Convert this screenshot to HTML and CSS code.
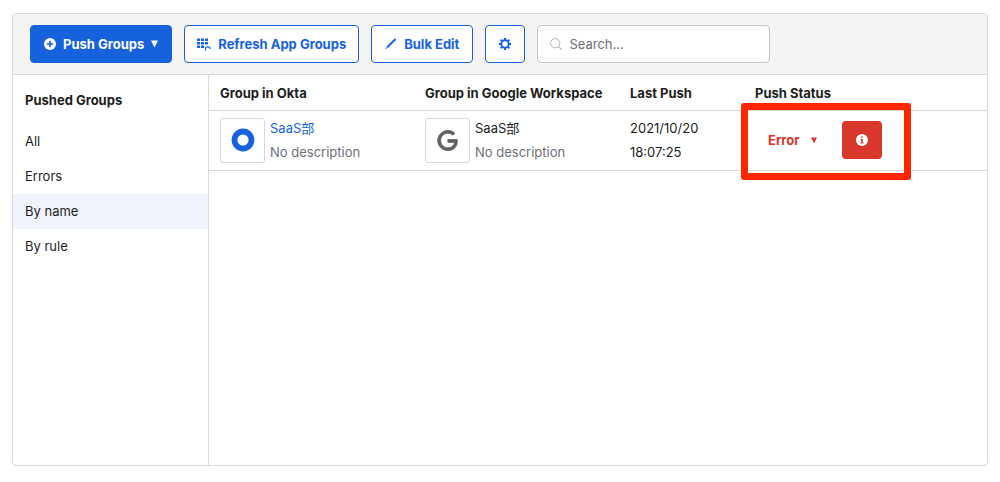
FILE: index.html
```html
<!DOCTYPE html>
<html lang="en">
<head>
<meta charset="utf-8">
<meta name="viewport" content="width=device-width, initial-scale=1">
<title>Push Groups</title>
<link rel="stylesheet" href="styles.css">
</head>
<body>
<main class="panel">
  <div class="toolbar">
    <button type="button" class="btn btn-primary">
      <svg class="icon" viewBox="0 0 12 12" aria-hidden="true"><circle cx="6" cy="6" r="6" fill="#fff"/><path d="M6 2.8v6.4M2.8 6h6.4" stroke="#1662dd" stroke-width="1.6"/></svg>
      <span>Push Groups</span>
      <svg class="caret" viewBox="0 0 7 8" aria-hidden="true"><path d="M0 .5h7L3.500 7.500z" fill="currentColor"/></svg>
    </button>
    <button type="button" class="btn">
      <svg class="icon-grid" viewBox="0 0 14 13" aria-hidden="true"><path d="M0 .5h3v2.500H0zM4 .5h3v2.500H4zM8 .5h3v2.500H8zM0 4h3v2.500H0zM4 4h3v2.500H4zM8 4h3v2.500H8zM0 7.500h3v2.500H0zM4 7.500h3v2.500H4z" fill="currentColor"/><path d="M8.500 12.500V10.500q0-1.700 2-1.700h1q1.700 0 1.900 2.200" fill="none" stroke="currentColor" stroke-width="1.200"/></svg>
      <span>Refresh App Groups</span>
    </button>
    <button type="button" class="btn btn-edit">
      <svg class="icon" viewBox="0 0 12 12" aria-hidden="true"><path d="M2.500 9L10 1.500" stroke="currentColor" stroke-width="1.900" stroke-linecap="round"/><path d="M.3 11.300l.7-1.700 1 1z" fill="currentColor"/></svg>
      <span>Bulk Edit</span>
    </button>
    <button type="button" class="btn btn-icon" aria-label="Settings">
      <svg class="icon" viewBox="0 0 12 12" aria-hidden="true"><circle cx="6" cy="6" r="3.700" fill="none" stroke="currentColor" stroke-width="1.900"/><path d="M6 0v2M6 10v2M0 6h2M10 6h2M1.700 1.700l1.400 1.400M8.900 8.900l1.400 1.400M1.700 10.300l1.400-1.400M8.900 3.100l1.400-1.400" stroke="currentColor" stroke-width="2"/></svg>
    </button>
    <label class="search">
      <svg class="icon" viewBox="0 0 12 12" fill="none" stroke="#b5b5b9" aria-hidden="true"><circle cx="5.200" cy="5.200" r="4.600"/><path d="M8.500 8.500l3 3" stroke-width="1.300"/></svg>
      <input type="text" placeholder="Search..." aria-label="Search">
    </label>
  </div>
  <div class="content">
    <nav class="sidebar">
      <h2 class="sidebar-title">Pushed Groups</h2>
      <a class="nav-item" href="#all">All</a>
      <a class="nav-item" href="#errors">Errors</a>
      <a class="nav-item nav-active" href="#name">By name</a>
      <a class="nav-item" href="#rule">By rule</a>
    </nav>
    <div class="list">
      <table class="groups">
        <colgroup><col class="col-group"><col class="col-group"><col class="col-push"><col></colgroup>
        <thead>
          <tr><th>Group in Okta</th><th>Group in Google Workspace</th><th>Last Push</th><th>Push Status</th></tr>
        </thead>
        <tbody>
          <tr>
            <td>
              <div class="group">
                <span class="logo"><svg class="logo-okta" viewBox="0 0 24 24" aria-hidden="true"><circle cx="12" cy="12" r="8.500" fill="none" stroke="#1662dd" stroke-width="5.800"/></svg></span>
                <span class="group-text"><a class="group-link" href="#group">SaaS部</a><span class="muted">No description</span></span>
              </div>
            </td>
            <td>
              <div class="group">
                <span class="logo"><svg class="logo-google" viewBox="-.5 -.5 25 25" aria-hidden="true"><path d="M12.480 10.920v3.280h7.840c-.24 1.840-.853 3.187-1.787 4.133-1.147 1.147-2.933 2.400-6.053 2.400-4.827 0-8.600-3.893-8.600-8.720s3.773-8.720 8.600-8.720c2.600 0 4.507 1.027 5.907 2.347l2.307-2.307C18.747 1.440 16.133 0 12.480 0 5.867 0 .307 5.387.307 12s5.560 12 12.173 12c3.573 0 6.267-1.173 8.373-3.360 2.160-2.160 2.840-5.213 2.840-7.667 0-.76-.053-1.467-.173-2.053H12.480z" fill="#616161" stroke="#616161"/></svg></span>
                <span class="group-text"><span>SaaS部</span><span class="muted">No description</span></span>
              </div>
            </td>
            <td><time class="push-time">2021/10/20<br>18:07:25</time></td>
            <td class="status-cell">
              <div class="status">
                <button type="button" class="error-menu"><span>Error</span><svg class="caret-small" viewBox="0 0 6 7" aria-hidden="true"><path d="M0 .5h6L3 6.500z" fill="currentColor"/></svg></button>
                <button type="button" class="error-info" aria-label="Error details"><svg class="icon" viewBox="0 0 12 12" aria-hidden="true"><circle cx="6" cy="6" r="6" fill="#fff"/><path d="M5.100 2.300h1.700v1.500H5.100zM4.500 4.900h2.300v3.500h.8v1.100H4.400V8.400h.8V6h-.7z" fill="#da372c"/></svg></button>
              </div>
              <div class="highlight"></div>
            </td>
          </tr>
        </tbody>
      </table>
    </div>
  </div>
</main>
</body>
</html>
```
FILE: styles.css
```css
* { box-sizing: border-box; }

body {
  margin: 0;
  padding: 13px 12px 16px;
  min-height: 100vh;
  display: flex;
  background: #fff;
  color: #1d1d21;
  font: 13px/24px Inter, "Noto Sans CJK JP", sans-serif;
}

button, input { font: inherit; }
a { color: inherit; text-decoration: none; }
svg { display: block; flex: none; }

.panel {
  flex: 1;
  display: flex;
  flex-direction: column;
  border: 1px solid #d7d7dc;
  border-radius: 4px;
}

.toolbar {
  display: flex;
  gap: 12px;
  padding: 11px 17px;
  background: #f4f4f4;
  border-bottom: 1px solid #d7d7dc;
  border-radius: 3px 3px 0 0;
}

.btn {
  display: flex;
  align-items: center;
  gap: 7px;
  height: 38px;
  padding: 0 12px;
  border: 1px solid #1662dd;
  border-radius: 4px;
  background: #fff;
  color: #1662dd;
  font-weight: 700;
  white-space: nowrap;
}

.btn-primary { padding: 0 13px; background: #1662dd; color: #fff; }
.btn-edit, .btn-icon { padding: 0 13px; }

.icon { width: 12px; height: 12px; }
.icon-grid { width: 14px; height: 13px; }
.caret { width: 7px; height: 8px; }
.caret-small { width: 6px; height: 7px; }

.search {
  display: flex;
  align-items: center;
  gap: 7px;
  flex: 0 1 233px;
  min-width: 0;
  height: 38px;
  padding: 0 12px;
  background: #fff;
  border: 1px solid #c6c6ca;
  border-radius: 4px;
}

.search input {
  flex: 1;
  min-width: 0;
  padding: 0;
  border: 0;
  outline: 0;
  background: transparent;
}

.search input::placeholder { color: #6e6e78; opacity: 1; }

.content { flex: 1; display: flex; }

.sidebar {
  flex: none;
  width: 196px;
  border-right: 1px solid #d7d7dc;
}

.sidebar-title {
  margin: 0;
  padding: 13px 12px 12px;
  font-size: 13px;
  line-height: 24px;
  font-weight: 700;
}

.nav-item { display: block; padding: 0 12px; line-height: 35px; }
.nav-active { background: #f1f4fd; }

.list { flex: 1; min-width: 0; }

.groups {
  width: 100%;
  table-layout: fixed;
  border-collapse: separate;
  border-spacing: 0;
}

.col-group { width: 205px; }
.col-push { width: 125px; }

.groups th, .groups td {
  padding: 6px 0 5px 11px;
  border-bottom: 1px solid #d7d7dc;
  text-align: left;
  vertical-align: middle;
}

.groups th { font-weight: 700; white-space: nowrap; }
.groups td { padding: 5px 0 6px 11px; }

.group { display: flex; align-items: center; gap: 5px; }

.logo {
  display: flex;
  align-items: center;
  justify-content: center;
  width: 45px;
  height: 45px;
  border: 1px solid #d7d7dc;
  border-radius: 3px;
}

.logo-okta { width: 24px; height: 24px; }
.logo-google { width: 21px; height: 21px; }

.group-text { display: flex; flex-direction: column; }
.group-link { color: #1662dd; }
.muted { color: #6e6e78; }
.push-time { display: block; }

.groups .status-cell { position: relative; }

.status { display: flex; align-items: center; gap: 12px; }

.error-menu {
  display: flex;
  align-items: center;
  gap: 11px;
  height: 38px;
  padding: 0 13px;
  border: 0;
  background: transparent;
  color: #da372c;
  font-weight: 700;
}

.error-info {
  display: flex;
  align-items: center;
  height: 38px;
  padding: 0 14px;
  border: 0;
  border-radius: 4px;
  background: #da372c;
}

.highlight {
  position: absolute;
  top: -8px;
  left: -3px;
  width: 170px;
  height: 77px;
  border: 7px solid #ff2600;
  border-radius: 3px;
  pointer-events: none;
}
```
